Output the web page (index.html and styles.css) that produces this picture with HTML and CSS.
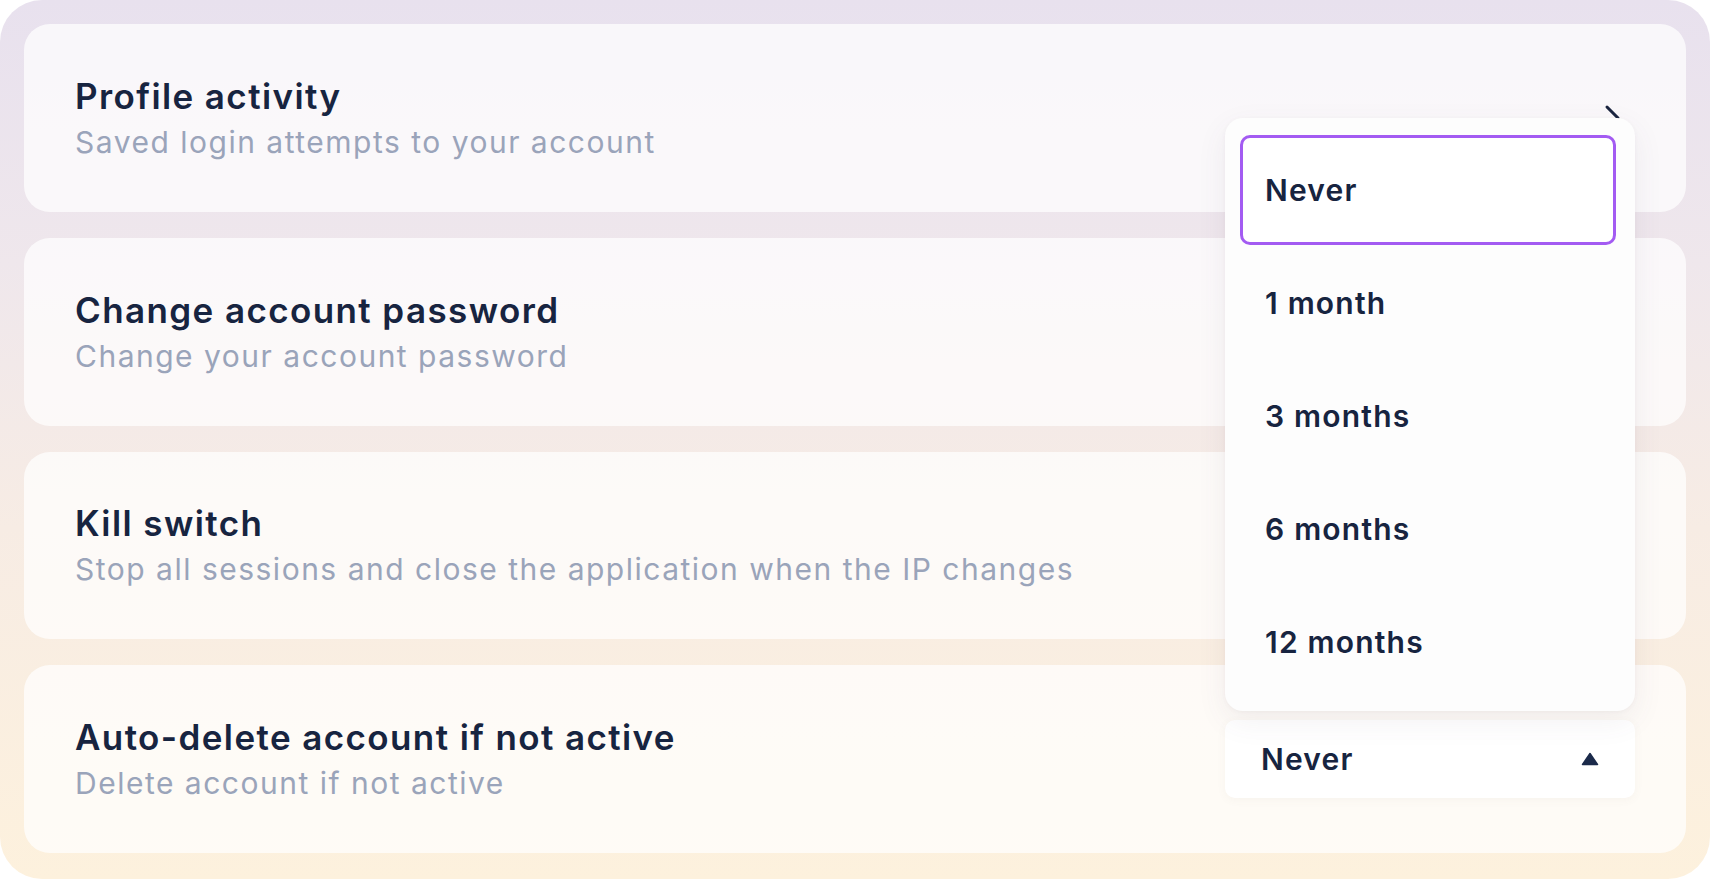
FILE: index.html
```html
<!DOCTYPE html>
<html lang="en">

<head>
    <meta charset="UTF-8">
    <meta name="viewport" content="width=device-width, initial-scale=1.0">
    <title>Security settings</title>
    <link rel="stylesheet" href="styles.css">
</head>

<body>
    <div class="panel">
        <div class="card">
            <div class="card-text">
                <div class="card-title">Profile activity</div>
                <div class="card-sub">Saved login attempts to your account</div>
            </div>
            <svg class="chevron" width="24" height="30" viewBox="0 0 24 30">
                <path d="M6 4 L17 15 L6 26" fill="none" stroke="#1b2540" stroke-width="3" stroke-linecap="round" stroke-linejoin="round" />
            </svg>
        </div>
        <div class="card">
            <div class="card-text">
                <div class="card-title">Change account password</div>
                <div class="card-sub">Change your account password</div>
            </div>
        </div>
        <div class="card">
            <div class="card-text">
                <div class="card-title">Kill switch</div>
                <div class="card-sub">Stop all sessions and close the application when the IP changes</div>
            </div>
        </div>
        <div class="card">
            <div class="card-text">
                <div class="card-title">Auto-delete account if not active</div>
                <div class="card-sub">Delete account if not active</div>
            </div>
            <div class="select">
                <span>Never</span>
                <svg width="18" height="14" viewBox="0 0 18 14">
                    <path d="M9 1.5 L16.5 12.5 L1.5 12.5 Z" fill="#1b2a4a" stroke="#1b2a4a" stroke-width="1.5" stroke-linejoin="round" />
                </svg>
                <!-- 打开的下拉菜单 -->
                <ul class="menu">
                    <li class="selected">Never</li>
                    <li>1 month</li>
                    <li>3 months</li>
                    <li>6 months</li>
                    <li>12 months</li>
                </ul>
            </div>
        </div>
    </div>
</body>

</html>
```

FILE: styles.css
```css
* {
    padding: 0;
    margin: 0;
    box-sizing: border-box;
}

html,
body {
    width: 100%;
    height: 100%;
    background-color: #ffffff;
    overflow: hidden;
    font-family: Inter, "Open Sans", "DejaVu Sans", sans-serif;
}

.panel {
    height: 879px;
    border-radius: 42px;
    background-image: linear-gradient(180deg, #e8e1ee 0%, #efe7ec 30%, #f7ece4 60%, #fdf1dd 100%);
    padding: 24px 24px 26px;
    display: flex;
    flex-direction: column;
    gap: 26px;
}

.card {
    flex: 1;
    border-radius: 26px;
    background-color: rgba(255, 255, 255, 0.72);
    display: flex;
    align-items: center;
    justify-content: space-between;
    padding: 0 51px 0 51px;
    position: relative;
}

.card-text {
    display: flex;
    flex-direction: column;
    gap: 8px;
}

.card-title {
    font-size: 35px;
    line-height: 40px;
    font-weight: 600;
    color: #172440;
    letter-spacing: 1.4px;
}

.card-sub {
    font-size: 30px;
    line-height: 36px;
    color: #9aa4ba;
    letter-spacing: 1.5px;
}

.chevron {
    margin-right: 10px;
}

.select {
    width: 410px;
    height: 78px;
    background-color: #ffffff;
    border-radius: 10px;
    box-shadow: 0 2px 10px rgba(120, 100, 80, 0.05);
    display: flex;
    align-items: center;
    justify-content: space-between;
    padding: 0 36px;
    font-size: 30px;
    font-weight: 600;
    color: #172440;
    letter-spacing: 1.2px;
    position: relative;
}

.menu {
    list-style: none;
    position: absolute;
    left: 0;
    bottom: calc(100% + 9px);
    width: 410px;
    height: 593px;
    background-color: #fdfdfd;
    border-radius: 18px;
    box-shadow: 0 10px 30px rgba(90, 80, 100, 0.08), 0 1px 4px rgba(90, 80, 100, 0.05);
    padding: 17px 19px 14px 15px;
    display: flex;
    flex-direction: column;
    gap: 3px;
    z-index: 2;
}

.menu li {
    flex: none;
    height: 110px;
    display: flex;
    align-items: center;
    padding-left: 22px;
    border: 3px solid transparent;
    border-radius: 10px;
}

.menu li.selected {
    border-color: #a35bf2;
    background-color: #ffffff;
}
```
